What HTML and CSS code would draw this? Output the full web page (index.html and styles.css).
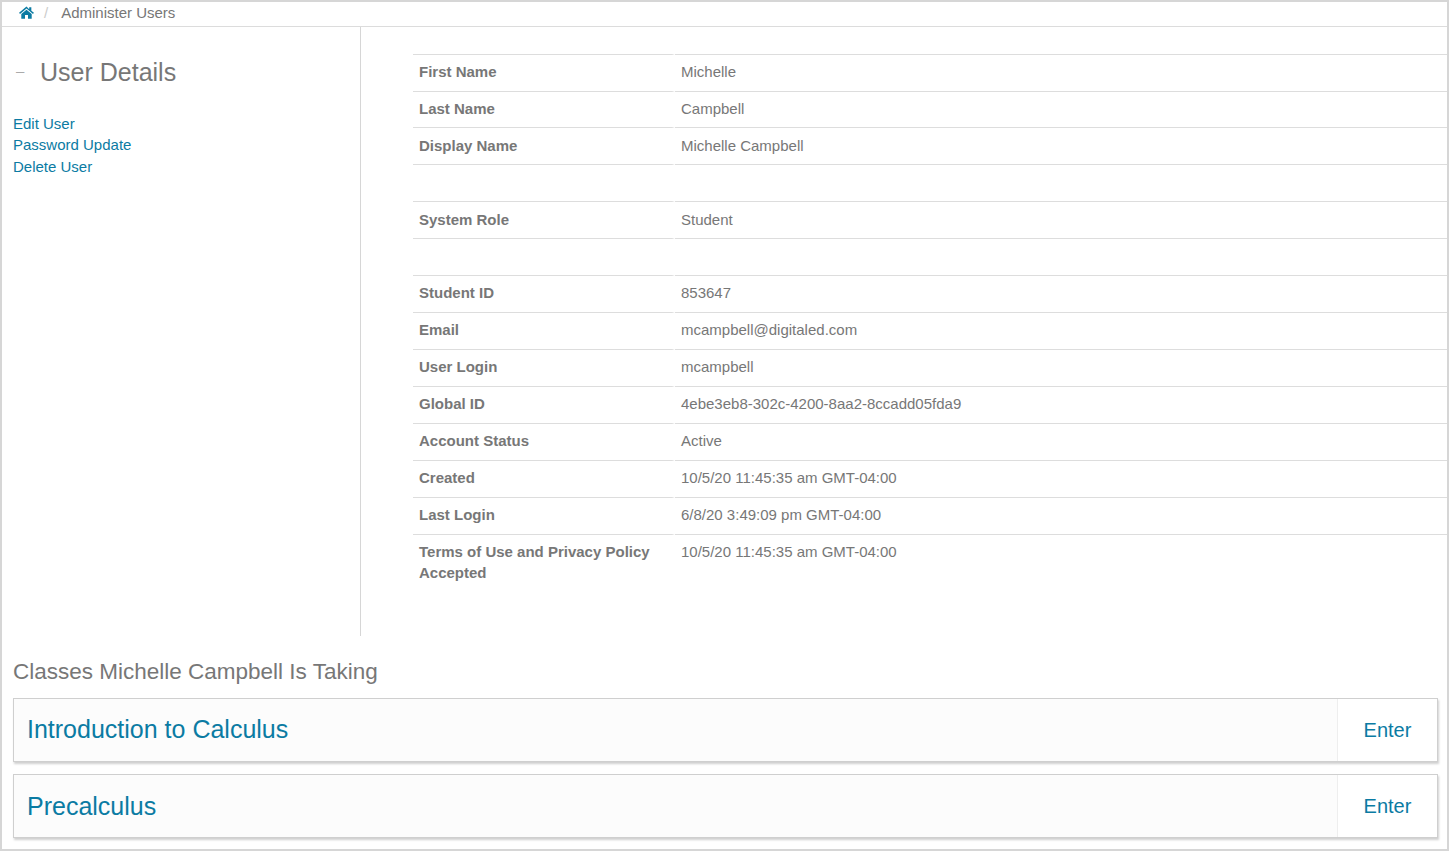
FILE: index.html
```html
<!DOCTYPE html>
<html lang="en">
<head>
<meta charset="utf-8">
<title>Administer Users</title>
<link rel="stylesheet" href="styles.css">
</head>
<body>
<div class="frame">
  <nav class="crumbs">
    <svg class="home" viewBox="0 0 16 14" width="15" height="13" aria-hidden="true"><path d="M8 .6 0 7.300l1 1.200L8 2.700l7 5.800 1-1.200-2.800-2.300V1.400h-2.300v2.100zM2.400 8.700V13.600H6.400V9.700h3.200v3.900h4V8.700L8 4z"/></svg>
    <span class="sep">/</span>
    <span class="crumb">Administer Users</span>
  </nav>
  <div class="top">
    <aside class="side">
      <h1 class="side-title"><span class="dash">–</span>User Details</h1>
      <ul class="side-links">
        <li><a href="#">Edit User</a></li>
        <li><a href="#">Password Update</a></li>
        <li><a href="#">Delete User</a></li>
      </ul>
    </aside>
    <main class="details">
      <table class="info">
        <tr><th>First Name</th><td>Michelle</td></tr>
        <tr class="short"><th>Last Name</th><td>Campbell</td></tr>
        <tr class="low"><th>Display Name</th><td>Michelle Campbell</td></tr>
        <tr><th></th><td></td></tr>
        <tr class="low"><th>System Role</th><td>Student</td></tr>
        <tr><th></th><td></td></tr>
        <tr><th>Student ID</th><td>853647</td></tr>
        <tr><th>Email</th><td>mcampbell@digitaled.com</td></tr>
        <tr><th>User Login</th><td>mcampbell</td></tr>
        <tr><th>Global ID</th><td>4ebe3eb8-302c-4200-8aa2-8ccadd05fda9</td></tr>
        <tr><th>Account Status</th><td>Active</td></tr>
        <tr><th>Created</th><td>10/5/20 11:45:35 am GMT-04:00</td></tr>
        <tr><th>Last Login</th><td>6/8/20 3:49:09 pm GMT-04:00</td></tr>
        <tr><th>Terms of Use and Privacy Policy Accepted</th><td>10/5/20 11:45:35 am GMT-04:00</td></tr>
      </table>
    </main>
  </div>
  <section class="classes">
    <h2 class="classes-title">Classes Michelle Campbell Is Taking</h2>
    <div class="card">
      <a class="card-name" href="#">Introduction to Calculus</a>
      <a class="card-enter" href="#">Enter</a>
    </div>
    <div class="card">
      <a class="card-name" href="#">Precalculus</a>
      <a class="card-enter" href="#">Enter</a>
    </div>
  </section>
</div>
</body>
</html>
```
FILE: styles.css
```css
* { box-sizing: border-box; }
html, body { margin: 0; padding: 0; background: #fff; }
body {
  font-family: "Liberation Sans", Arial, sans-serif;
  font-size: 15px;
  color: #777;
}
a { color: #0b7ba3; text-decoration: none; }

.frame {
  width: 1449px;
  height: 851px;
  border: 2px solid #d6d6d6;
  overflow: hidden;
}

.crumbs {
  height: 25px;
  border-bottom: 1px solid #dcdcdc;
  padding: 0 0 4px 17px;
  display: flex;
  align-items: center;
}
.home { fill: #0b7ba3; display: block; }
.sep { color: #ccc; margin: 0 13px 0 10px; }

.top { display: flex; height: 609px; }
.side {
  width: 359px;
  border-right: 1px solid #d6d6d6;
  padding: 29px 0 0 11px;
}
.side-title {
  margin: 0;
  font-size: 25px;
  font-weight: 400;
  line-height: 30px;
  color: #777;
}
.dash { color: #aaa; font-size: 15px; display: inline-block; width: 27px; padding-left: 3px; vertical-align: 5px; }
.side-links { list-style: none; margin: 25.900px 0 0; padding: 0; }
.side-links li { line-height: 21.500px; }

.details { flex: 1; padding: 27px 0 0 52px; }
.info { border-collapse: separate; border-spacing: 0; width: 1034px; table-layout: fixed; }
.info th, .info td {
  height: 37px;
  border-top: 1px solid #ddd;
  padding: 6px 6px 0;
  line-height: 21px;
  vertical-align: top;
  text-align: left;
}
.info th { width: 262px; font-weight: 700; border-right: 3px solid #fff; }
.info .short th, .info .short td { height: 36px; }
.info .low th, .info .low td { padding-top: 7px; }

.classes { padding: 0 9px 0 11px; }
.classes-title {
  margin: 20px 0 10px;
  font-size: 22.500px;
  font-weight: 400;
  line-height: 32px;
  color: #777;
}
.card {
  height: 64px;
  margin-bottom: 12px;
  border: 1px solid #cfcfcf;
  box-shadow: 1px 2px 2px #d0d0d0;
  background: #fcfcfc;
  display: flex;
  align-items: center;
}
.card-name { flex: 1; padding: 0 0 2px 13px; font-size: 25px; }
.card + .card .card-name { padding-bottom: 0; }
.card-enter {
  width: 100px;
  height: 100%;
  background: #fff;
  border-left: 1px solid #eee;
  font-size: 20px;
  display: flex;
  align-items: center;
  justify-content: center;
}
```
